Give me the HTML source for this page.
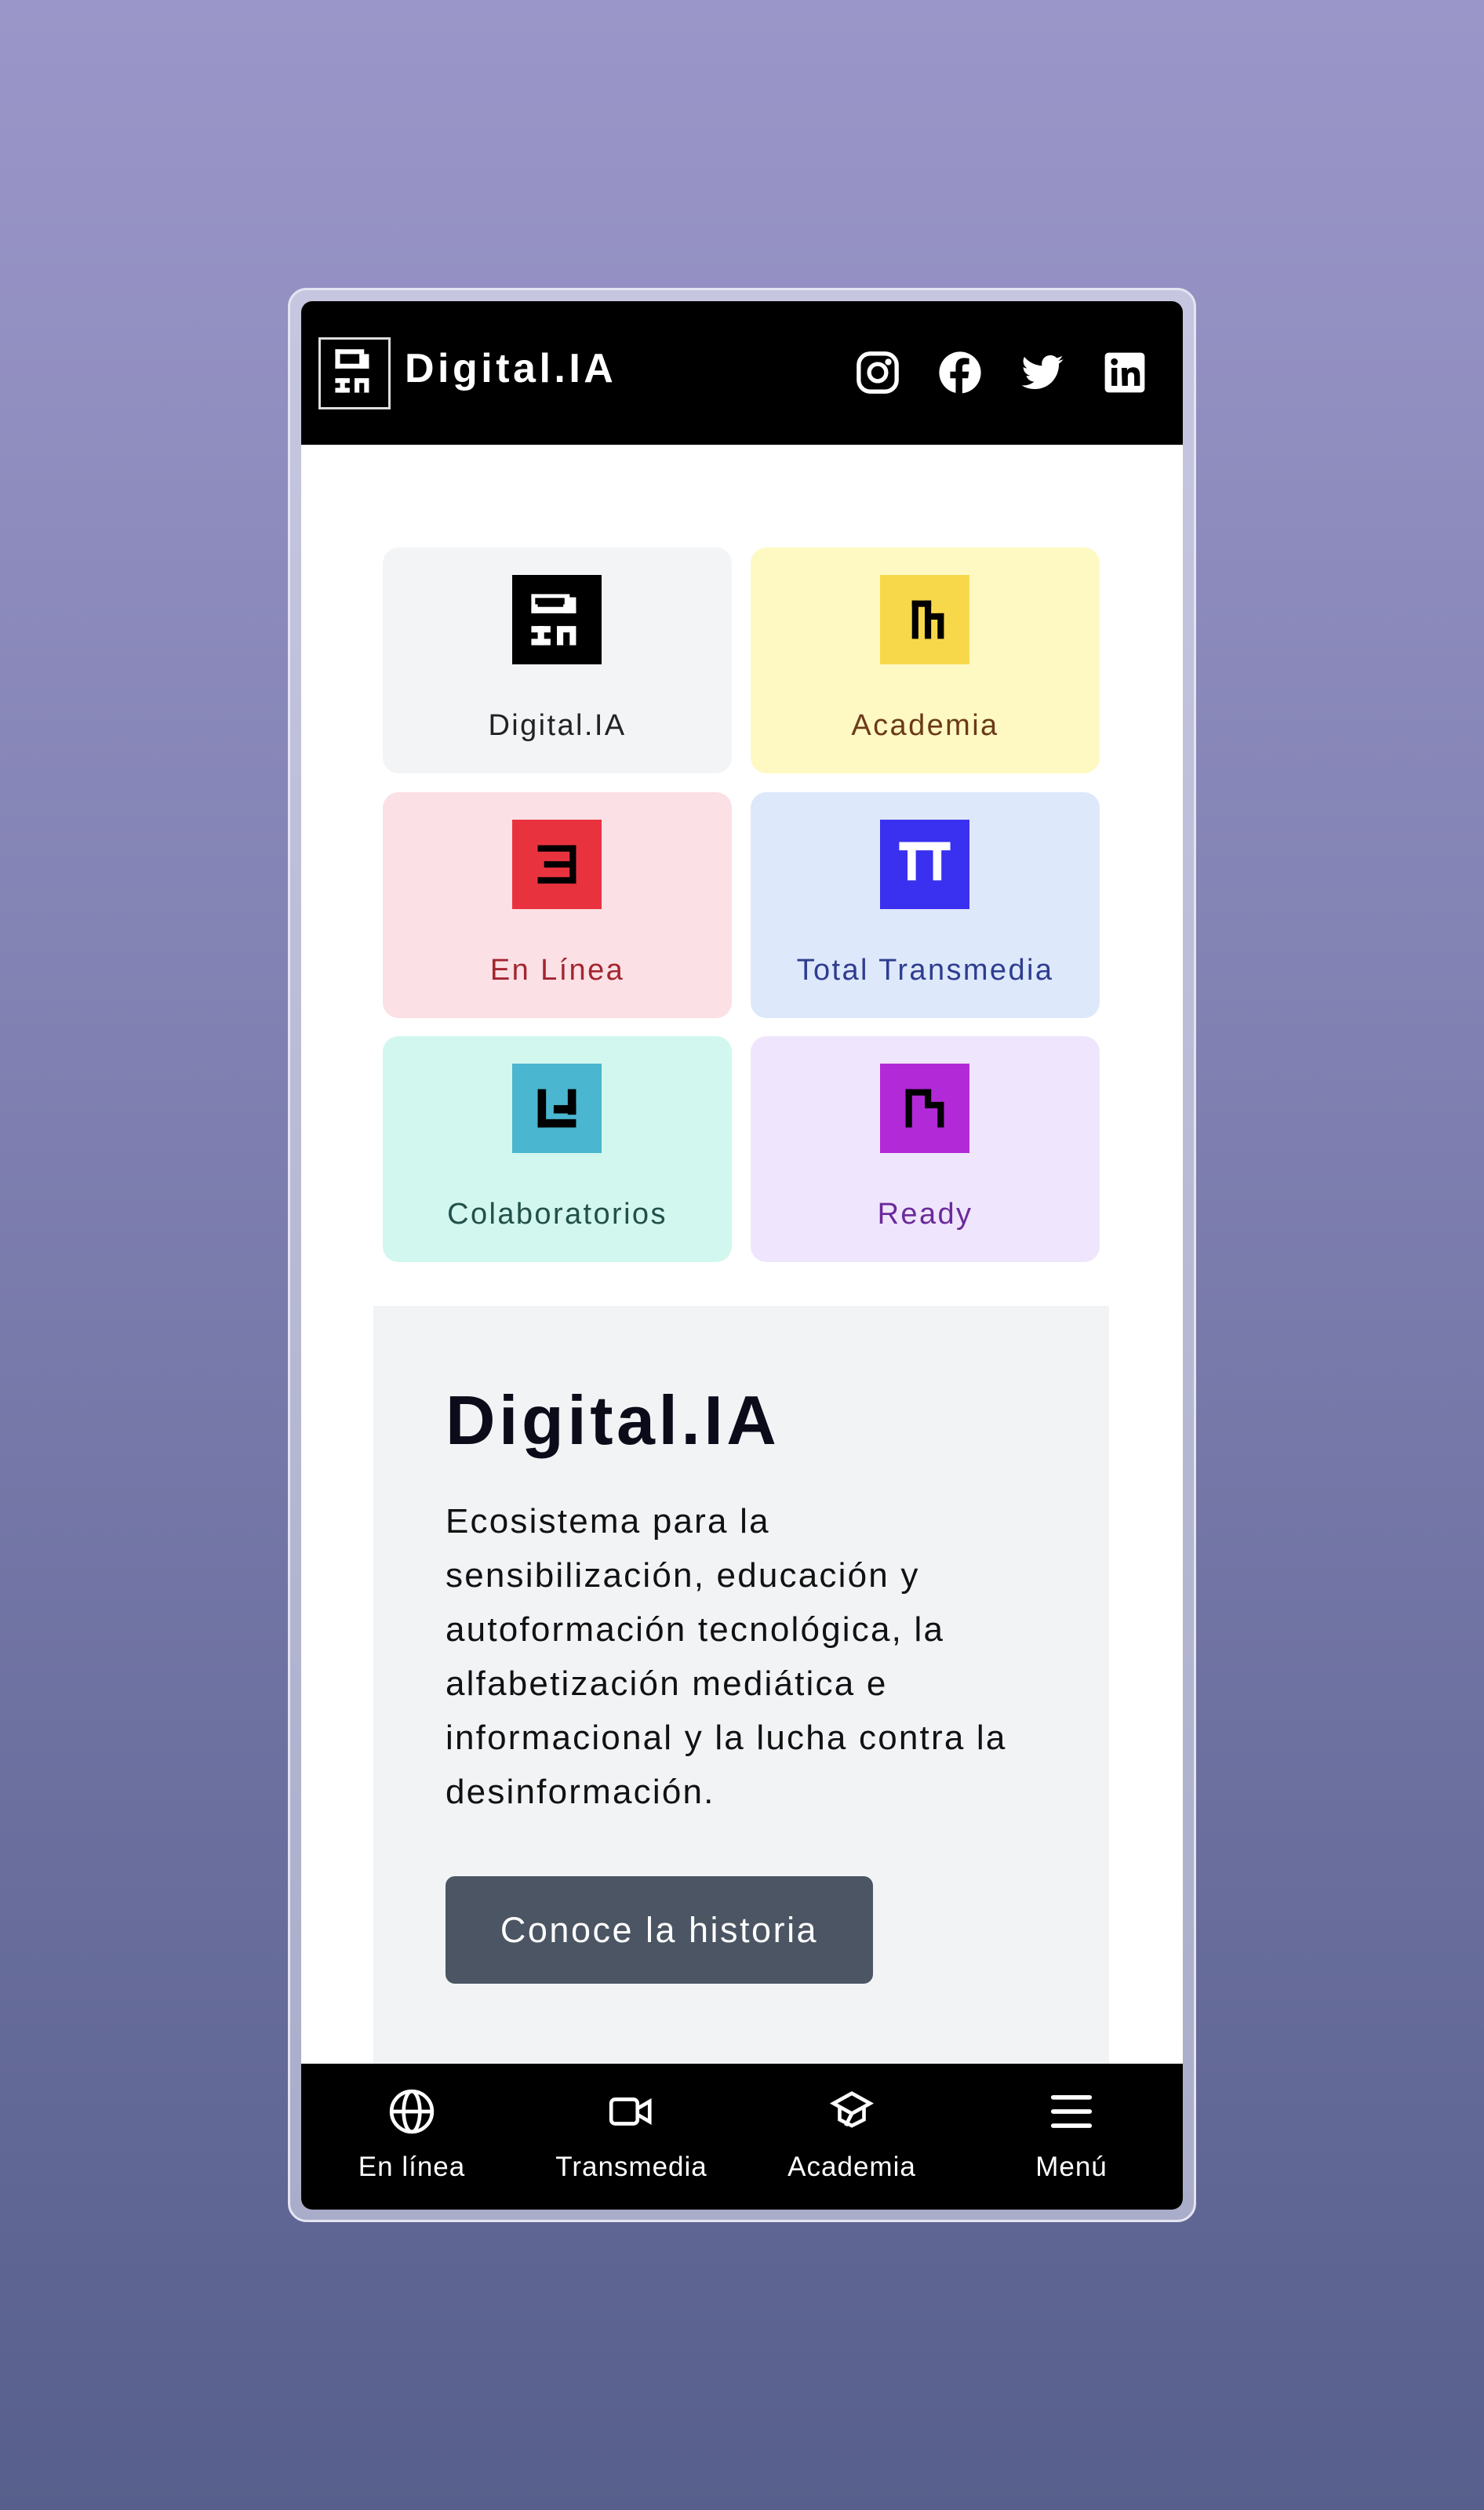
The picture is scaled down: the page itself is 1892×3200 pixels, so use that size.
<!DOCTYPE html>
<html><head><meta charset="utf-8"><style>
*{margin:0;padding:0;box-sizing:border-box}
body{width:1892px;height:3200px;background:linear-gradient(#9b96c9,#7e7fb0 45%,#575f8c);font-family:"Liberation Sans",sans-serif;position:relative;overflow:hidden}
.frame{position:absolute;left:367px;top:367px;width:1158px;height:2466px;border-radius:24px;background:linear-gradient(#c6c6e0,#a9adc9);border:3px solid #e4e4f2}
.inner{position:absolute;left:384px;top:384px;width:1124px;height:2433px;background:#fff;border-radius:14px;overflow:hidden}
.hdr{position:absolute;left:0;top:0;width:100%;height:183px;background:#000}
.logo{position:absolute;left:22px;top:46px;width:92px;height:92px;border:3px solid #ddd}
.brand{position:absolute;left:132px;top:56px;color:#fff;font-weight:bold;font-size:52px;letter-spacing:4.5px}
.soc{position:absolute;top:62px;width:58px;height:58px}
.card{position:absolute;width:445px;height:288px;border-radius:20px;text-align:center}
.card svg{position:absolute;left:165px;top:35px}
.card span{position:absolute;left:0;right:0;top:206px;font-size:38px;letter-spacing:2.4px}
.info{position:absolute;left:92px;top:1281px;width:938px;height:980px;background:#f2f3f5}
.info h1{position:absolute;left:92px;top:95px;font-size:88px;color:#0b0b1a;font-weight:bold;letter-spacing:4.5px}
.info p{position:absolute;left:92px;top:240px;width:880px;font-size:44px;line-height:69px;color:#111;letter-spacing:2.2px;white-space:nowrap}
.btn{position:absolute;left:92px;top:727px;width:545px;height:137px;background:#4b5563;border-radius:12px;color:#fff;font-size:45px;text-align:center;line-height:137px;letter-spacing:2.5px}
.nav{position:absolute;left:0;top:2247px;width:100%;height:186px;background:#000}
.ni{position:absolute;top:30px;width:200px;text-align:center;color:#fff;font-size:35px;letter-spacing:1px}
.ni svg{display:block;margin:0 auto 20px}
</style></head><body>
<div class="frame"></div>
<div class="inner">
<div class="hdr">
 <div class="logo"><svg width="86" height="86" viewBox="0 0 14 14"><g fill="#fff"><rect x="3" y="2" width="6" height="1"/><rect x="3" y="2" width="1" height="4"/><rect x="3" y="5" width="7" height="1"/><rect x="8" y="3" width="2" height="3"/><rect x="3" y="8" width="3" height="1"/><rect x="4" y="8" width="1" height="3"/><rect x="3" y="10" width="3" height="1"/><rect x="7" y="8" width="3" height="3"/></g><rect x="8" y="9" width="1" height="2" fill="#000"/></svg></div>
 <div class="brand">Digital.IA</div>
 <svg class="soc" style="left:706px" viewBox="0 0 24 24" fill="none" stroke="#fff" stroke-width="2.2"><rect x="2" y="2" width="20" height="20" rx="6"/><circle cx="12" cy="12" r="4.5"/><circle cx="17.6" cy="6.4" r=".6" fill="#fff"/></svg>
 <svg class="soc" style="left:811px" viewBox="0 0 24 24"><circle cx="12" cy="12" r="11" fill="#fff"/><path d="M13.2 24V15h3l.5-3.5h-3.5V9.3c0-1 .3-1.7 1.8-1.7h1.8V4.5c-.3 0-1.4-.2-2.7-.2-2.7 0-4.4 1.6-4.4 4.6v2.6H6.8V15h2.9v9z" fill="#000"/></svg>
 <svg class="soc" style="left:916px" viewBox="0 0 24 24"><path fill="#fff" d="M23 5c-.8.4-1.7.6-2.600.7.9-.6 1.6-1.4 2-2.5-.9.5-1.9.9-2.9 1.1A4.5 4.5 0 0 0 11.8 8.4 12.8 12.8 0 0 1 2.5 3.7a4.5 4.5 0 0 0 1.4 6c-.7 0-1.4-.2-2-.6 0 2.2 1.5 4 3.6 4.5-.7.2-1.4.2-2 .1.6 1.8 2.2 3.1 4.2 3.1A9 9 0 0 1 1 18.7 12.8 12.8 0 0 0 7.9 20.7c8.3 0 12.8-6.9 12.8-12.8v-.6c.9-.6 1.7-1.4 2.3-2.300z"/></svg>
 <svg class="soc" style="left:1021px" viewBox="0 0 24 24"><rect x="1.5" y="1.5" width="21" height="21" rx="2" fill="#fff"/><g fill="#000"><rect x="5" y="9.5" width="3" height="9.5"/><circle cx="6.5" cy="6.3" r="1.8"/><path d="M10.3 9.5h2.9v1.4c.5-.9 1.6-1.7 3.2-1.7 3 0 3.6 2 3.6 4.6V19h-3v-4.6c0-1.1 0-2.5-1.6-2.5s-1.8 1.2-1.8 2.4V19h-3z"/></g></svg>
</div>

<div class="card" style="left:104px;top:314px;background:#f3f4f6"><svg width="114" height="114" viewBox="0 0 14 14"><rect width="14" height="14" fill="#000"/><g fill="#fff"><rect x="3" y="3" width="6" height="1"/><rect x="3" y="3" width="1" height="3"/><rect x="3" y="5" width="7" height="1"/><rect x="8" y="3.5" width="2" height="2.5"/><rect x="3" y="8" width="3" height="1"/><rect x="4" y="8" width="1" height="3"/><rect x="3" y="10" width="3" height="1"/><rect x="7" y="8" width="3" height="3"/></g><rect x="8" y="9" width="1" height="2" fill="#000"/><rect x="3.6" y="3.6" width="4.6" height="1" fill="#000"/></svg><span style="color:#222">Digital.IA</span></div>
<div class="card" style="left:573px;top:314px;background:#fef9c3"><svg width="114" height="114" viewBox="0 0 14 14"><rect width="14" height="14" fill="#f8d84b"/><g fill="#000"><rect x="5" y="4" width="3" height="1"/><rect x="5" y="4" width="1" height="6"/><rect x="7" y="4" width="1" height="6"/><rect x="7" y="6" width="3" height="1"/><rect x="9" y="6" width="1" height="4"/></g></svg><span style="color:#6b3a1a">Academia</span></div>
<div class="card" style="left:104px;top:626px;background:#fbe0e5"><svg width="114" height="114" viewBox="0 0 14 14"><rect width="14" height="14" fill="#e8333f"/><g fill="#000"><rect x="4" y="4" width="6" height="1"/><rect x="5" y="6.5" width="5" height="1"/><rect x="4" y="9" width="6" height="1"/><rect x="9" y="4" width="1" height="6"/></g></svg><span style="color:#a3252f">En Línea</span></div>
<div class="card" style="left:573px;top:626px;background:#dde8fb"><svg width="114" height="114" viewBox="0 0 14 14"><rect width="14" height="14" fill="#3a30ef"/><g fill="#fff"><rect x="3" y="3.5" width="8" height="1.3"/><rect x="4.3" y="3.5" width="1.3" height="6"/><rect x="8.3" y="3.5" width="1.3" height="6"/></g></svg><span style="color:#2f3d8f">Total Transmedia</span></div>
<div class="card" style="left:104px;top:937px;background:#d2f7ef"><svg width="114" height="114" viewBox="0 0 14 14"><rect width="14" height="14" fill="#4ab6cf"/><g fill="#000"><rect x="4" y="4" width="1.3" height="6"/><rect x="4" y="8.7" width="6" height="1.3"/><rect x="8.7" y="4" width="1.3" height="4"/><rect x="6.5" y="6.5" width="3.5" height="1.3"/></g></svg><span style="color:#22504a">Colaboratorios</span></div>
<div class="card" style="left:573px;top:937px;background:#efe6fd"><svg width="114" height="114" viewBox="0 0 14 14"><rect width="14" height="14" fill="#b22ad7"/><g fill="#000"><rect x="4" y="4" width="4" height="1"/><rect x="4" y="4" width="1" height="6"/><rect x="7" y="4" width="1" height="3"/><rect x="7" y="6" width="3" height="1"/><rect x="9" y="6" width="1" height="4"/></g></svg><span style="color:#6b2a9a">Ready</span></div>

<div class="info">
 <h1>Digital.IA</h1>
 <p>Ecosistema para la<br>sensibilización, educación y<br>autoformación tecnológica, la<br>alfabetización mediática e<br>informacional y la lucha contra la<br>desinformación.</p>
 <div class="btn">Conoce la historia</div>
</div>

<div class="nav">
 <div class="ni" style="left:41px"><svg width="62" height="62" viewBox="0 0 24 24" fill="none" stroke="#fff" stroke-width="1.8"><circle cx="12" cy="12" r="10"/><ellipse cx="12" cy="12" rx="4" ry="10"/><path d="M2 12h20"/></svg>En línea</div>
 <div class="ni" style="left:321px"><svg width="62" height="62" viewBox="0 0 24 24" fill="none" stroke="#fff" stroke-width="1.8"><rect x="2" y="6" width="13" height="12" rx="2"/><path d="M15 10.5l6-3.5v10l-6-3.5"/></svg>Transmedia</div>
 <div class="ni" style="left:602px"><svg width="62" height="62" viewBox="0 0 24 24" fill="none" stroke="#fff" stroke-width="1.8"><path d="M12 3l9 5-9 5-9-5z"/><path d="M6 10v6l6 3 6-3v-6"/><path d="M12 13l-3 6"/></svg>Academia</div>
 <div class="ni" style="left:882px"><svg width="62" height="62" viewBox="0 0 24 24" fill="none" stroke="#fff" stroke-width="2.2" stroke-linecap="round"><path d="M3 5h18M3 12h18M3 19h18"/></svg>Menú</div>
</div>
</div>
</body></html>
